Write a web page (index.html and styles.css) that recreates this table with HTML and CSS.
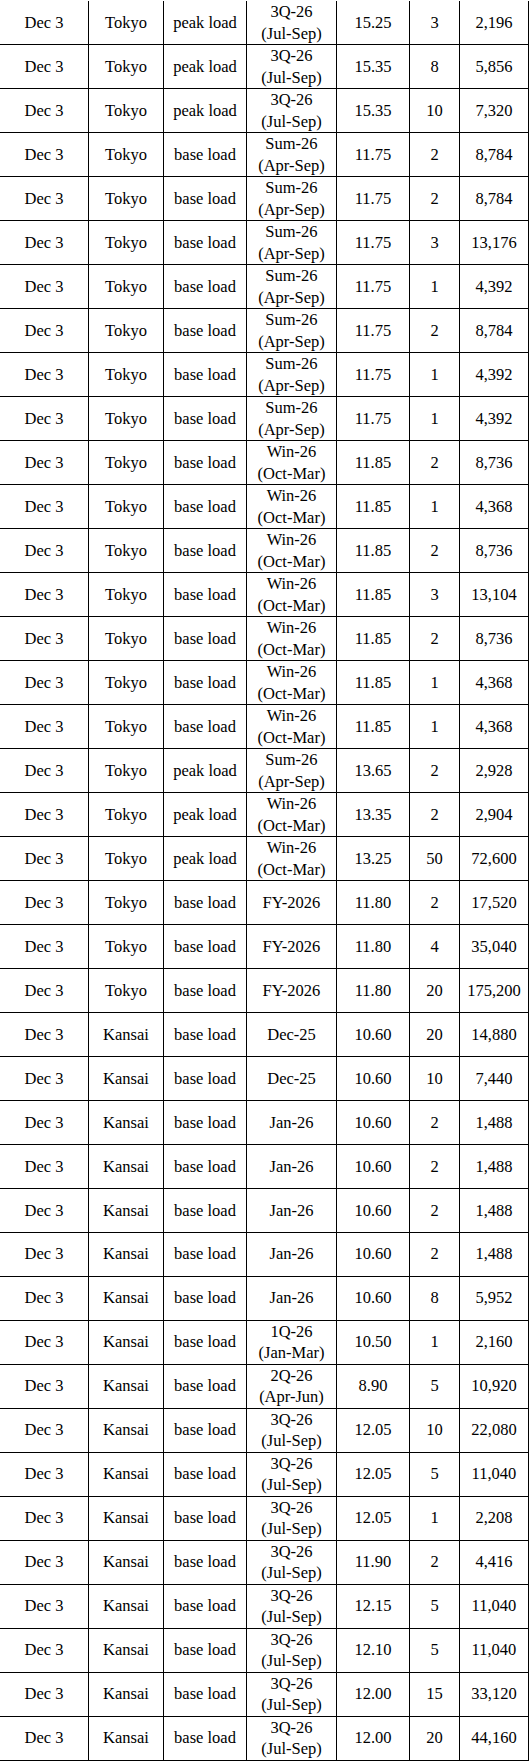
FILE: index.html
```html
<!DOCTYPE html>
<html>
<head>
<meta charset="utf-8">
<link rel="stylesheet" href="styles.css">
</head>
<body>
<table class="trades">
<colgroup>
<col class="c-date"><col class="c-area"><col class="c-type"><col class="c-period"><col class="c-price"><col class="c-qty"><col class="c-vol">
</colgroup>
<tbody>
<tr><td>Dec 3</td><td>Tokyo</td><td>peak load</td><td>3Q-26<br>(Jul-Sep)</td><td>15.25</td><td>3</td><td>2,196</td></tr>
<tr><td>Dec 3</td><td>Tokyo</td><td>peak load</td><td>3Q-26<br>(Jul-Sep)</td><td>15.35</td><td>8</td><td>5,856</td></tr>
<tr><td>Dec 3</td><td>Tokyo</td><td>peak load</td><td>3Q-26<br>(Jul-Sep)</td><td>15.35</td><td>10</td><td>7,320</td></tr>
<tr><td>Dec 3</td><td>Tokyo</td><td>base load</td><td>Sum-26<br>(Apr-Sep)</td><td>11.75</td><td>2</td><td>8,784</td></tr>
<tr><td>Dec 3</td><td>Tokyo</td><td>base load</td><td>Sum-26<br>(Apr-Sep)</td><td>11.75</td><td>2</td><td>8,784</td></tr>
<tr><td>Dec 3</td><td>Tokyo</td><td>base load</td><td>Sum-26<br>(Apr-Sep)</td><td>11.75</td><td>3</td><td>13,176</td></tr>
<tr><td>Dec 3</td><td>Tokyo</td><td>base load</td><td>Sum-26<br>(Apr-Sep)</td><td>11.75</td><td>1</td><td>4,392</td></tr>
<tr><td>Dec 3</td><td>Tokyo</td><td>base load</td><td>Sum-26<br>(Apr-Sep)</td><td>11.75</td><td>2</td><td>8,784</td></tr>
<tr><td>Dec 3</td><td>Tokyo</td><td>base load</td><td>Sum-26<br>(Apr-Sep)</td><td>11.75</td><td>1</td><td>4,392</td></tr>
<tr><td>Dec 3</td><td>Tokyo</td><td>base load</td><td>Sum-26<br>(Apr-Sep)</td><td>11.75</td><td>1</td><td>4,392</td></tr>
<tr><td>Dec 3</td><td>Tokyo</td><td>base load</td><td>Win-26<br>(Oct-Mar)</td><td>11.85</td><td>2</td><td>8,736</td></tr>
<tr><td>Dec 3</td><td>Tokyo</td><td>base load</td><td>Win-26<br>(Oct-Mar)</td><td>11.85</td><td>1</td><td>4,368</td></tr>
<tr><td>Dec 3</td><td>Tokyo</td><td>base load</td><td>Win-26<br>(Oct-Mar)</td><td>11.85</td><td>2</td><td>8,736</td></tr>
<tr><td>Dec 3</td><td>Tokyo</td><td>base load</td><td>Win-26<br>(Oct-Mar)</td><td>11.85</td><td>3</td><td>13,104</td></tr>
<tr><td>Dec 3</td><td>Tokyo</td><td>base load</td><td>Win-26<br>(Oct-Mar)</td><td>11.85</td><td>2</td><td>8,736</td></tr>
<tr><td>Dec 3</td><td>Tokyo</td><td>base load</td><td>Win-26<br>(Oct-Mar)</td><td>11.85</td><td>1</td><td>4,368</td></tr>
<tr><td>Dec 3</td><td>Tokyo</td><td>base load</td><td>Win-26<br>(Oct-Mar)</td><td>11.85</td><td>1</td><td>4,368</td></tr>
<tr><td>Dec 3</td><td>Tokyo</td><td>peak load</td><td>Sum-26<br>(Apr-Sep)</td><td>13.65</td><td>2</td><td>2,928</td></tr>
<tr><td>Dec 3</td><td>Tokyo</td><td>peak load</td><td>Win-26<br>(Oct-Mar)</td><td>13.35</td><td>2</td><td>2,904</td></tr>
<tr><td>Dec 3</td><td>Tokyo</td><td>peak load</td><td>Win-26<br>(Oct-Mar)</td><td>13.25</td><td>50</td><td>72,600</td></tr>
<tr><td>Dec 3</td><td>Tokyo</td><td>base load</td><td>FY-2026</td><td>11.80</td><td>2</td><td>17,520</td></tr>
<tr><td>Dec 3</td><td>Tokyo</td><td>base load</td><td>FY-2026</td><td>11.80</td><td>4</td><td>35,040</td></tr>
<tr><td>Dec 3</td><td>Tokyo</td><td>base load</td><td>FY-2026</td><td>11.80</td><td>20</td><td>175,200</td></tr>
<tr><td>Dec 3</td><td>Kansai</td><td>base load</td><td>Dec-25</td><td>10.60</td><td>20</td><td>14,880</td></tr>
<tr><td>Dec 3</td><td>Kansai</td><td>base load</td><td>Dec-25</td><td>10.60</td><td>10</td><td>7,440</td></tr>
<tr><td>Dec 3</td><td>Kansai</td><td>base load</td><td>Jan-26</td><td>10.60</td><td>2</td><td>1,488</td></tr>
<tr><td>Dec 3</td><td>Kansai</td><td>base load</td><td>Jan-26</td><td>10.60</td><td>2</td><td>1,488</td></tr>
<tr><td>Dec 3</td><td>Kansai</td><td>base load</td><td>Jan-26</td><td>10.60</td><td>2</td><td>1,488</td></tr>
<tr><td>Dec 3</td><td>Kansai</td><td>base load</td><td>Jan-26</td><td>10.60</td><td>2</td><td>1,488</td></tr>
<tr><td>Dec 3</td><td>Kansai</td><td>base load</td><td>Jan-26</td><td>10.60</td><td>8</td><td>5,952</td></tr>
<tr><td>Dec 3</td><td>Kansai</td><td>base load</td><td>1Q-26<br>(Jan-Mar)</td><td>10.50</td><td>1</td><td>2,160</td></tr>
<tr><td>Dec 3</td><td>Kansai</td><td>base load</td><td>2Q-26<br>(Apr-Jun)</td><td>8.90</td><td>5</td><td>10,920</td></tr>
<tr><td>Dec 3</td><td>Kansai</td><td>base load</td><td>3Q-26<br>(Jul-Sep)</td><td>12.05</td><td>10</td><td>22,080</td></tr>
<tr><td>Dec 3</td><td>Kansai</td><td>base load</td><td>3Q-26<br>(Jul-Sep)</td><td>12.05</td><td>5</td><td>11,040</td></tr>
<tr><td>Dec 3</td><td>Kansai</td><td>base load</td><td>3Q-26<br>(Jul-Sep)</td><td>12.05</td><td>1</td><td>2,208</td></tr>
<tr><td>Dec 3</td><td>Kansai</td><td>base load</td><td>3Q-26<br>(Jul-Sep)</td><td>11.90</td><td>2</td><td>4,416</td></tr>
<tr><td>Dec 3</td><td>Kansai</td><td>base load</td><td>3Q-26<br>(Jul-Sep)</td><td>12.15</td><td>5</td><td>11,040</td></tr>
<tr><td>Dec 3</td><td>Kansai</td><td>base load</td><td>3Q-26<br>(Jul-Sep)</td><td>12.10</td><td>5</td><td>11,040</td></tr>
<tr><td>Dec 3</td><td>Kansai</td><td>base load</td><td>3Q-26<br>(Jul-Sep)</td><td>12.00</td><td>15</td><td>33,120</td></tr>
<tr><td>Dec 3</td><td>Kansai</td><td>base load</td><td>3Q-26<br>(Jul-Sep)</td><td>12.00</td><td>20</td><td>44,160</td></tr>
</tbody>
</table>
</body>
</html>
```

FILE: styles.css
```css
html, body {
  margin: 0;
  padding: 0;
  background: #fff;
}

body {
  padding-top: 1px;
  font-family: "Liberation Serif", "Times New Roman", serif;
  font-size: 16.5px;
  color: #000;
}

.trades {
  border-collapse: separate;
  border-spacing: 0;
  table-layout: fixed;
  width: 529px;
}

.c-date { width: 89px; }
.c-area { width: 75px; }
.c-type { width: 83px; }
.c-period { width: 90px; }
.c-price { width: 73px; }
.c-qty { width: 50px; }
.c-vol { width: 69px; }

.trades td {
  box-sizing: border-box;
  height: 43.97px;
  padding: 0;
  border-right: 1px solid #000;
  border-bottom: 1px solid #000;
  text-align: center;
  vertical-align: middle;
  line-height: 21.5px;
  white-space: nowrap;
  overflow: hidden;
}
```
